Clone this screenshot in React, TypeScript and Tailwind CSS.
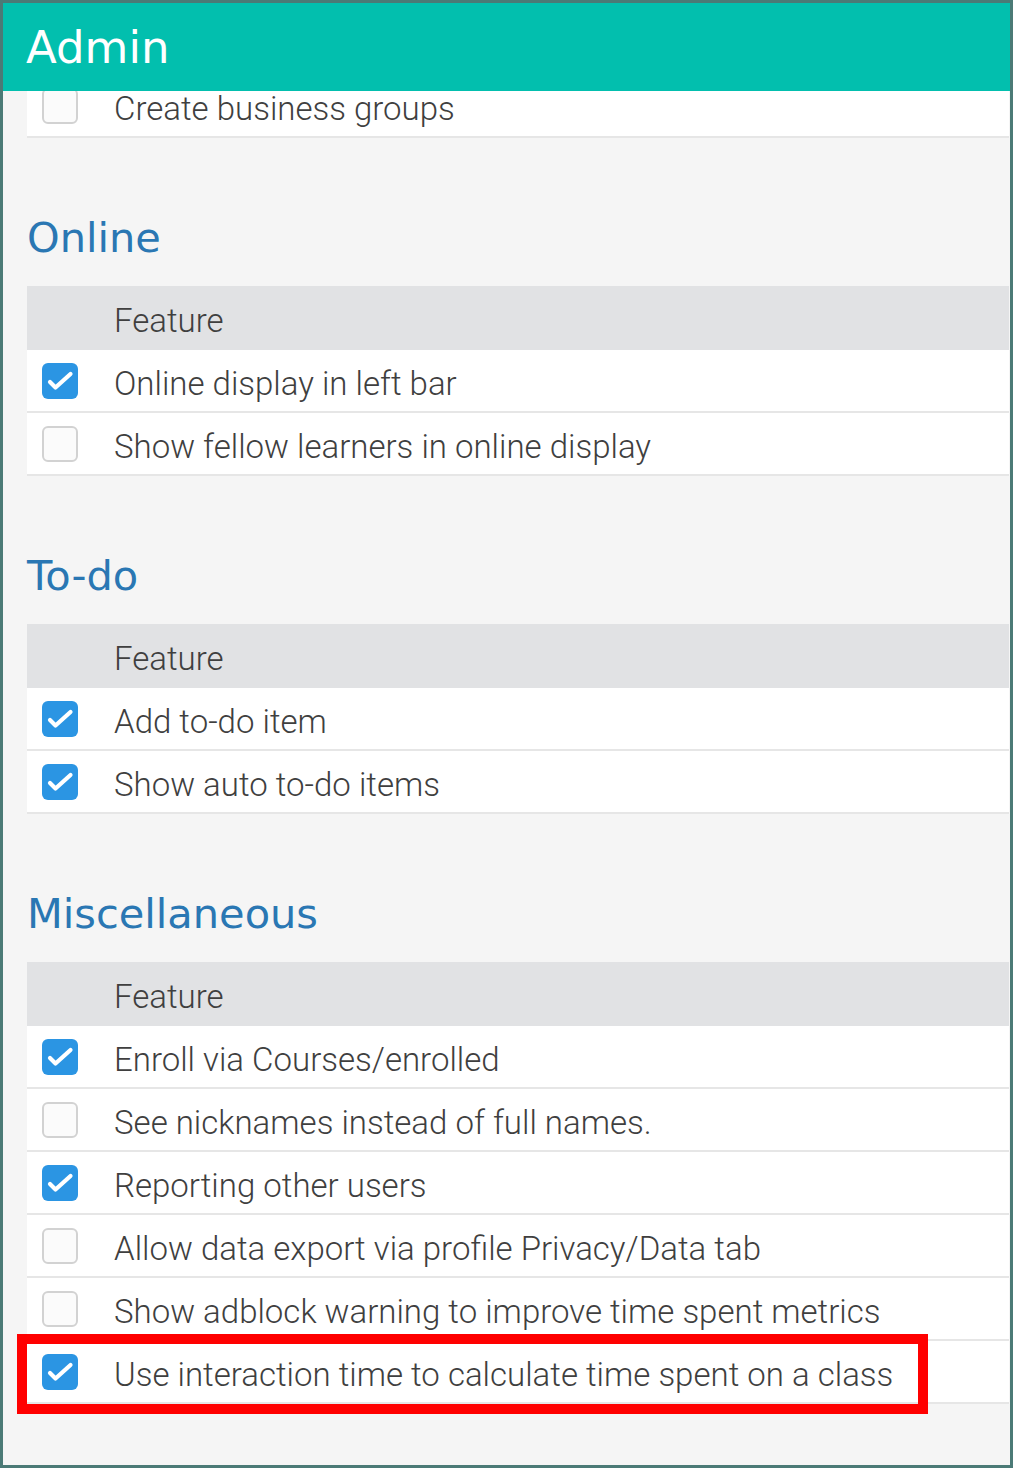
type Row = { label: string; checked: boolean }

type Section = { title: string; rows: Row[] }

const sections: Section[] = [
  {
    title: 'Online',
    rows: [
      { label: 'Online display in left bar', checked: true },
      { label: 'Show fellow learners in online display', checked: false },
    ],
  },
  {
    title: 'To-do',
    rows: [
      { label: 'Add to-do item', checked: true },
      { label: 'Show auto to-do items', checked: true },
    ],
  },
  {
    title: 'Miscellaneous',
    rows: [
      { label: 'Enroll via Courses/enrolled', checked: true },
      { label: 'See nicknames instead of full names.', checked: false },
      { label: 'Reporting other users', checked: true },
      { label: 'Allow data export via profile Privacy/Data tab', checked: false },
      { label: 'Show adblock warning to improve time spent metrics', checked: false },
      { label: 'Use interaction time to calculate time spent on a class', checked: true },
    ],
  },
]

function Checkbox({ checked }: { checked: boolean }) {
  if (checked) {
    return (
      <span className="flex h-[36px] w-[36px] shrink-0 items-center justify-center rounded-[6px] bg-[#2b95e3]">
        <svg width="36" height="36" viewBox="0 0 36 36" fill="none">
          <path d="M8 19l5.5 5.5L28.5 11" stroke="#fff" strokeWidth="4.2" strokeLinecap="round" strokeLinejoin="round" />
        </svg>
      </span>
    )
  }

  return <span className="h-[36px] w-[36px] shrink-0 rounded-[6px] border-2 border-[#d2d2d2] bg-[#fbfbfb]" />
}

function FeatureRow({ row, highlight = false }: { row: Row; highlight?: boolean }) {
  return (
    <div className="relative flex h-[63px] items-center border-b-2 border-[#e6e6e6] bg-white pl-[15px]">
      <Checkbox checked={row.checked} />
      <span className="ml-[36px] pt-[5px] text-[33px] font-light leading-none text-[#3f3f3f]">{row.label}</span>
      {highlight && (
        <div className="absolute -left-[10px] -top-[7px] h-[80px] w-[911px] border-[10px] border-[#ff0000]" />
      )}
    </div>
  )
}

export default function App() {
  return (
    <div className="h-[1468px] w-[1014px] bg-white">
      <div className="h-[1468px] w-[1013px] overflow-hidden border-[3px] border-[#4b7a76] bg-[#f5f5f5] font-['Roboto',sans-serif]">
        <div className="relative z-10 flex h-[88px] items-center bg-[#02bfae] pl-[23px]">
          <span className="font-['DejaVu_Sans',sans-serif] text-[45px] leading-none text-white">Admin</span>
        </div>

        <div className="pl-[24px] pr-[1px]">
          <div className="-mt-[16px]">
            <FeatureRow row={{ label: 'Create business groups', checked: false }} />
          </div>

          {sections.map((section) => (
            <section key={section.title}>
              <h2 className="mt-[76px] mb-[24px] h-[48px] font-['DejaVu_Sans',sans-serif] text-[41.5px] leading-[48px] text-[#2a77b3]">
                {section.title}
              </h2>
              <div className="flex h-[64px] items-center bg-[#e1e2e4] pl-[87px] pt-[4px] text-[33px] font-light leading-none text-[#3f3f3f]">
                Feature
              </div>
              {section.rows.map((row, i) => (
                <FeatureRow
                  key={row.label}
                  row={row}
                  highlight={section.title === 'Miscellaneous' && i === section.rows.length - 1}
                />
              ))}
            </section>
          ))}
        </div>
      </div>
    </div>
  )
}
